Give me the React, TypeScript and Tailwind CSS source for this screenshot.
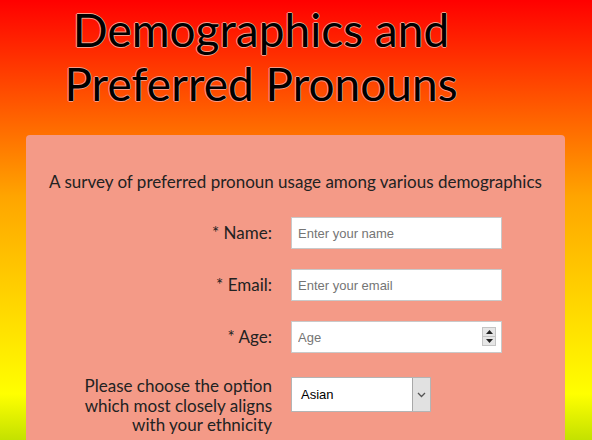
import React from "react";

const font = "font-['Lato','Noto_Sans',sans-serif]";

const Spinner = () => (
  <div className="pointer-events-none absolute right-[6px] top-[6px] flex h-[19px] w-[14px] flex-col border border-[#c4c4c4] bg-[#e6e6e6]">
    <div className="flex flex-1 items-center justify-center border-b border-[#c4c4c4]">
      <svg width="7" height="4" viewBox="0 0 7 4">
        <path d="M0 4 L3.5 0 L7 4 Z" fill="#222" />
      </svg>
    </div>
    <div className="flex flex-1 items-center justify-center">
      <svg width="7" height="4" viewBox="0 0 7 4">
        <path d="M0 0 L3.5 4 L7 0 Z" fill="#222" />
      </svg>
    </div>
  </div>
);

const inputCls =
  "h-[32px] w-[211px] border border-[#c9c9c9] bg-white px-[6px] text-[13px] text-[#333] outline-none placeholder:text-[#757575] font-['Liberation_Sans',Arial,sans-serif]";

export default function App() {
  return (
    <div
      className={`h-[1180px] w-full bg-[linear-gradient(#ff0000_0px,#ffa500_197px,#ffff00_394px,#008000_591px,#0000ff_788px,#4b0082_985px,#ee82ee_1182px)] ${font}`}
    >
      <h1 className="pr-[70px] pt-[3px] text-center text-[46px] font-normal leading-[54px] text-black [text-shadow:1px_0_0_#f49a87,-1px_0_0_#f49a87,0_1px_0_#f49a87,0_-1px_0_#f49a87]">
        Demographics and
        <br />
        Preferred Pronouns
      </h1>

      <div className="mx-[26px] mr-[27px] mt-[24px] rounded-[4px] bg-[#f49a87] pb-10 pt-[35px] text-[#222]">
        <p className="text-center text-[17px] leading-[24px]">
          A survey of preferred pronoun usage among various demographics
        </p>

        <form className="mt-[23px] grid grid-cols-[246px_211px] items-center gap-x-[19px] gap-y-[20px]">
          <label className="text-right text-[17px]">* Name:</label>
          <input className={inputCls} placeholder="Enter your name" />

          <label className="text-right text-[17px]">* Email:</label>
          <input className={inputCls} placeholder="Enter your email" />

          <label className="text-right text-[17px]">* Age:</label>
          <div className="relative">
            <input className={inputCls} placeholder="Age" />
            <Spinner />
          </div>

          <label className="mt-[3px] self-start text-right text-[17px] leading-[19.5px]">
            Please choose the option
            <br />
            which most closely aligns
            <br />
            with your ethnicity
          </label>
          <div className="mt-[4px] flex h-[35px] w-[140px] self-start border border-[#b4b4b4] bg-white">
            <span className="flex flex-1 items-center pl-[9px] text-[13px] text-black font-['Liberation_Sans',Arial,sans-serif]">
              Asian
            </span>
            <span className="flex w-[18px] items-center justify-center border-l border-[#a8a8a8] bg-[#e1e1e1]">
              <svg width="9" height="6" viewBox="0 0 9 6">
                <path d="M1 1 L4.5 4.5 L8 1" fill="none" stroke="#555" strokeWidth="1.3" />
              </svg>
            </span>
          </div>
        </form>
      </div>
    </div>
  );
}
